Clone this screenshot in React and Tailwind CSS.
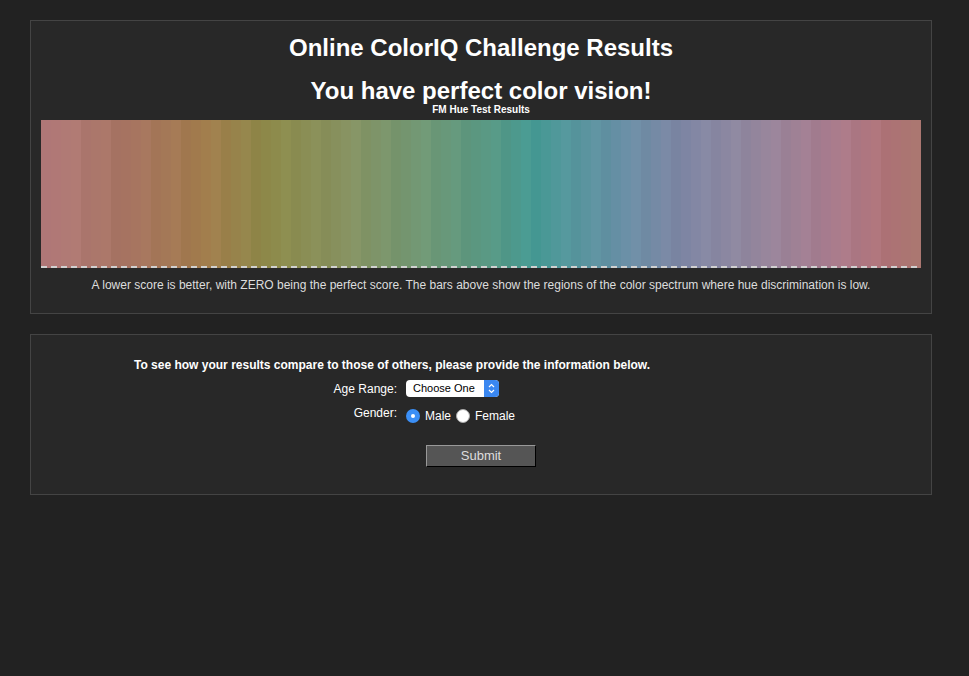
import React from 'react';

// key hues of the FM spectrum, sampled from the reference left to right
const STOPS = [
  [0.0, [178, 122, 122]],
  [0.1, [166, 116, 96]],
  [0.18, [162, 124, 76]],
  [0.26, [140, 138, 74]],
  [0.34, [136, 146, 96]],
  [0.44, [110, 152, 118]],
  [0.52, [84, 152, 134]],
  [0.56, [70, 154, 148]],
  [0.66, [104, 144, 166]],
  [0.73, [126, 134, 164]],
  [0.8, [144, 136, 160]],
  [0.9, [168, 124, 142]],
  [0.96, [176, 116, 122]],
  [1.0, [168, 116, 110]],
];

function colorAt(t) {
  for (let i = 0; i < STOPS.length - 1; i++) {
    const [a, ca] = STOPS[i];
    const [b, cb] = STOPS[i + 1];
    if (t >= a && t <= b) {
      const k = (t - a) / (b - a);
      return ca.map((v, j) => v + (cb[j] - v) * k);
    }
  }
  return STOPS[STOPS.length - 1][1];
}

const BARS = Array.from({ length: 88 }, (_, i) => {
  const [r, g, b] = colorAt(i / 87);
  const jitter = ((i * 37) % 7) - 3;
  const c = (v) => Math.round(Math.min(255, Math.max(0, v + jitter)));
  return `rgb(${c(r)},${c(g)},${c(b)})`;
});

function Spectrum() {
  return (
    <div className="relative mx-[10px] mt-[4px] flex h-[148px]">
      {BARS.map((bg, i) => (
        <div key={i} className="flex-1" style={{ background: bg }} />
      ))}
      <div className="absolute bottom-0 left-0 right-0 h-[2px] bg-[repeating-linear-gradient(90deg,#d0d0d0_0_6px,transparent_6px_10px)]" />
    </div>
  );
}

export default function App() {
  return (
    <div className="min-h-screen bg-[#222222] pt-[20px] px-[30px] font-['Liberation_Sans',Arial,sans-serif] text-white">
      {/* Results panel */}
      <div className="w-[902px] border border-[#444] bg-[#282828] pb-[21px]">
        <h1 className="mt-[14px] text-center text-[24px] font-bold leading-[26px]">Online ColorIQ Challenge Results</h1>
        <h2 className="mt-[16px] text-center text-[24px] font-bold leading-[28px]">You have perfect color vision!</h2>
        <p className="-mt-[1px] text-center text-[10px] font-bold leading-[12px]">FM Hue Test Results</p>
        <Spectrum />
        <p className="mt-[10px] text-center text-[12px] leading-[14px] text-[#ddd]">
          A lower score is better, with ZERO being the perfect score. The bars above show the regions of the color spectrum where hue discrimination is low.
        </p>
      </div>

      {/* Compare form */}
      <div className="mt-[20px] w-[902px] border border-[#444] bg-[#282828] pt-[23px] pb-[27px]">
        <div className="ml-[103px]">
          <p className="text-[12px] font-bold leading-[14px]">
            To see how your results compare to those of others, please provide the information below.
          </p>
          <div className="mt-[8px] flex items-center">
            <span className="w-[263px] text-right text-[12px] leading-[14px]">Age Range:</span>
            <div className="ml-[9px] flex h-[17px] w-[93px] items-stretch overflow-hidden rounded-[4px] bg-white">
              <span className="flex-1 pl-[7px] text-[11px] leading-[17px] text-black">Choose One</span>
              <span className="flex w-[15px] flex-col items-center justify-center bg-[#3a87f0]">
                <svg width="7" height="11" viewBox="0 0 7 11" fill="none" stroke="white" strokeWidth="1.2">
                  <path d="M1 4 L3.5 1.5 L6 4" />
                  <path d="M1 7 L3.5 9.5 L6 7" />
                </svg>
              </span>
            </div>
          </div>
          <div className="mt-[9px] flex items-center">
            <span className="w-[263px] self-start text-right text-[12px] leading-[14px]">Gender:</span>
            <div className="ml-[9px] mt-[3px] flex items-center text-[12px] leading-[14px]">
              <span className="flex h-[14px] w-[14px] items-center justify-center rounded-full bg-[#3b8ff6]">
                <span className="h-[4px] w-[4px] rounded-full bg-white" />
              </span>
              <span className="ml-[5px]">Male</span>
              <span className="ml-[5px] h-[14px] w-[14px] rounded-full border border-[#aaa] bg-white" />
              <span className="ml-[5px]">Female</span>
            </div>
          </div>
        </div>
        <div className="mt-[22px] flex justify-center">
          <button className="h-[22px] w-[110px] border border-t-[#999] border-l-[#999] border-b-black border-r-black bg-[#555] text-[13px] leading-[20px] text-[#ddd]">
            Submit
          </button>
        </div>
      </div>
    </div>
  );
}
